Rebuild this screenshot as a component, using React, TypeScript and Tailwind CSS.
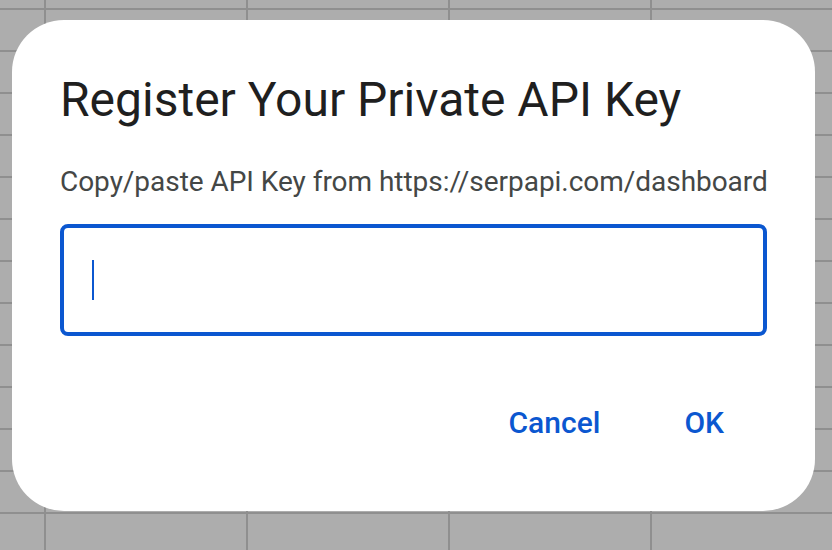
export default function App() {
  return (
    <div className="relative h-[550px] w-full overflow-hidden bg-[#adadad] bg-[linear-gradient(to_right,#8f8f8f_2px,transparent_2px),linear-gradient(to_bottom,#8f8f8f_2px,transparent_2px)] bg-[size:202px_42px] bg-[position:44px_8px] font-['Roboto',sans-serif]">
      {/* API key dialog */}
      <div className="absolute left-[12px] top-[20px] flex h-[491px] w-[803px] flex-col rounded-[52px] bg-white px-12 pt-[50px]">
        <h1 className="text-[48px] leading-[60px] font-normal text-[#1f1f1f]">
          Register Your Private API Key
        </h1>
        <p className="mt-[32px] whitespace-nowrap text-[28px] leading-[40px] tracking-[-0.04px] text-[#444746]">
          Copy/paste API Key from https://serpapi.com/dashboard
        </p>
        <div className="mt-[22px] flex h-[112px] items-center rounded-[8px] border-4 border-[#0b57d0] px-[28px]">
          <div className="h-[40px] w-[2px] bg-[#0b57d0]" />
        </div>
        <div className="mt-[67px] flex justify-end gap-[36px] pr-[19px]">
          <button className="px-[24px] text-[30px] leading-[40px] font-medium text-[#0b57d0]">
            Cancel
          </button>
          <button className="px-[24px] text-[30px] leading-[40px] font-medium text-[#0b57d0]">
            OK
          </button>
        </div>
      </div>
    </div>
  );
}
